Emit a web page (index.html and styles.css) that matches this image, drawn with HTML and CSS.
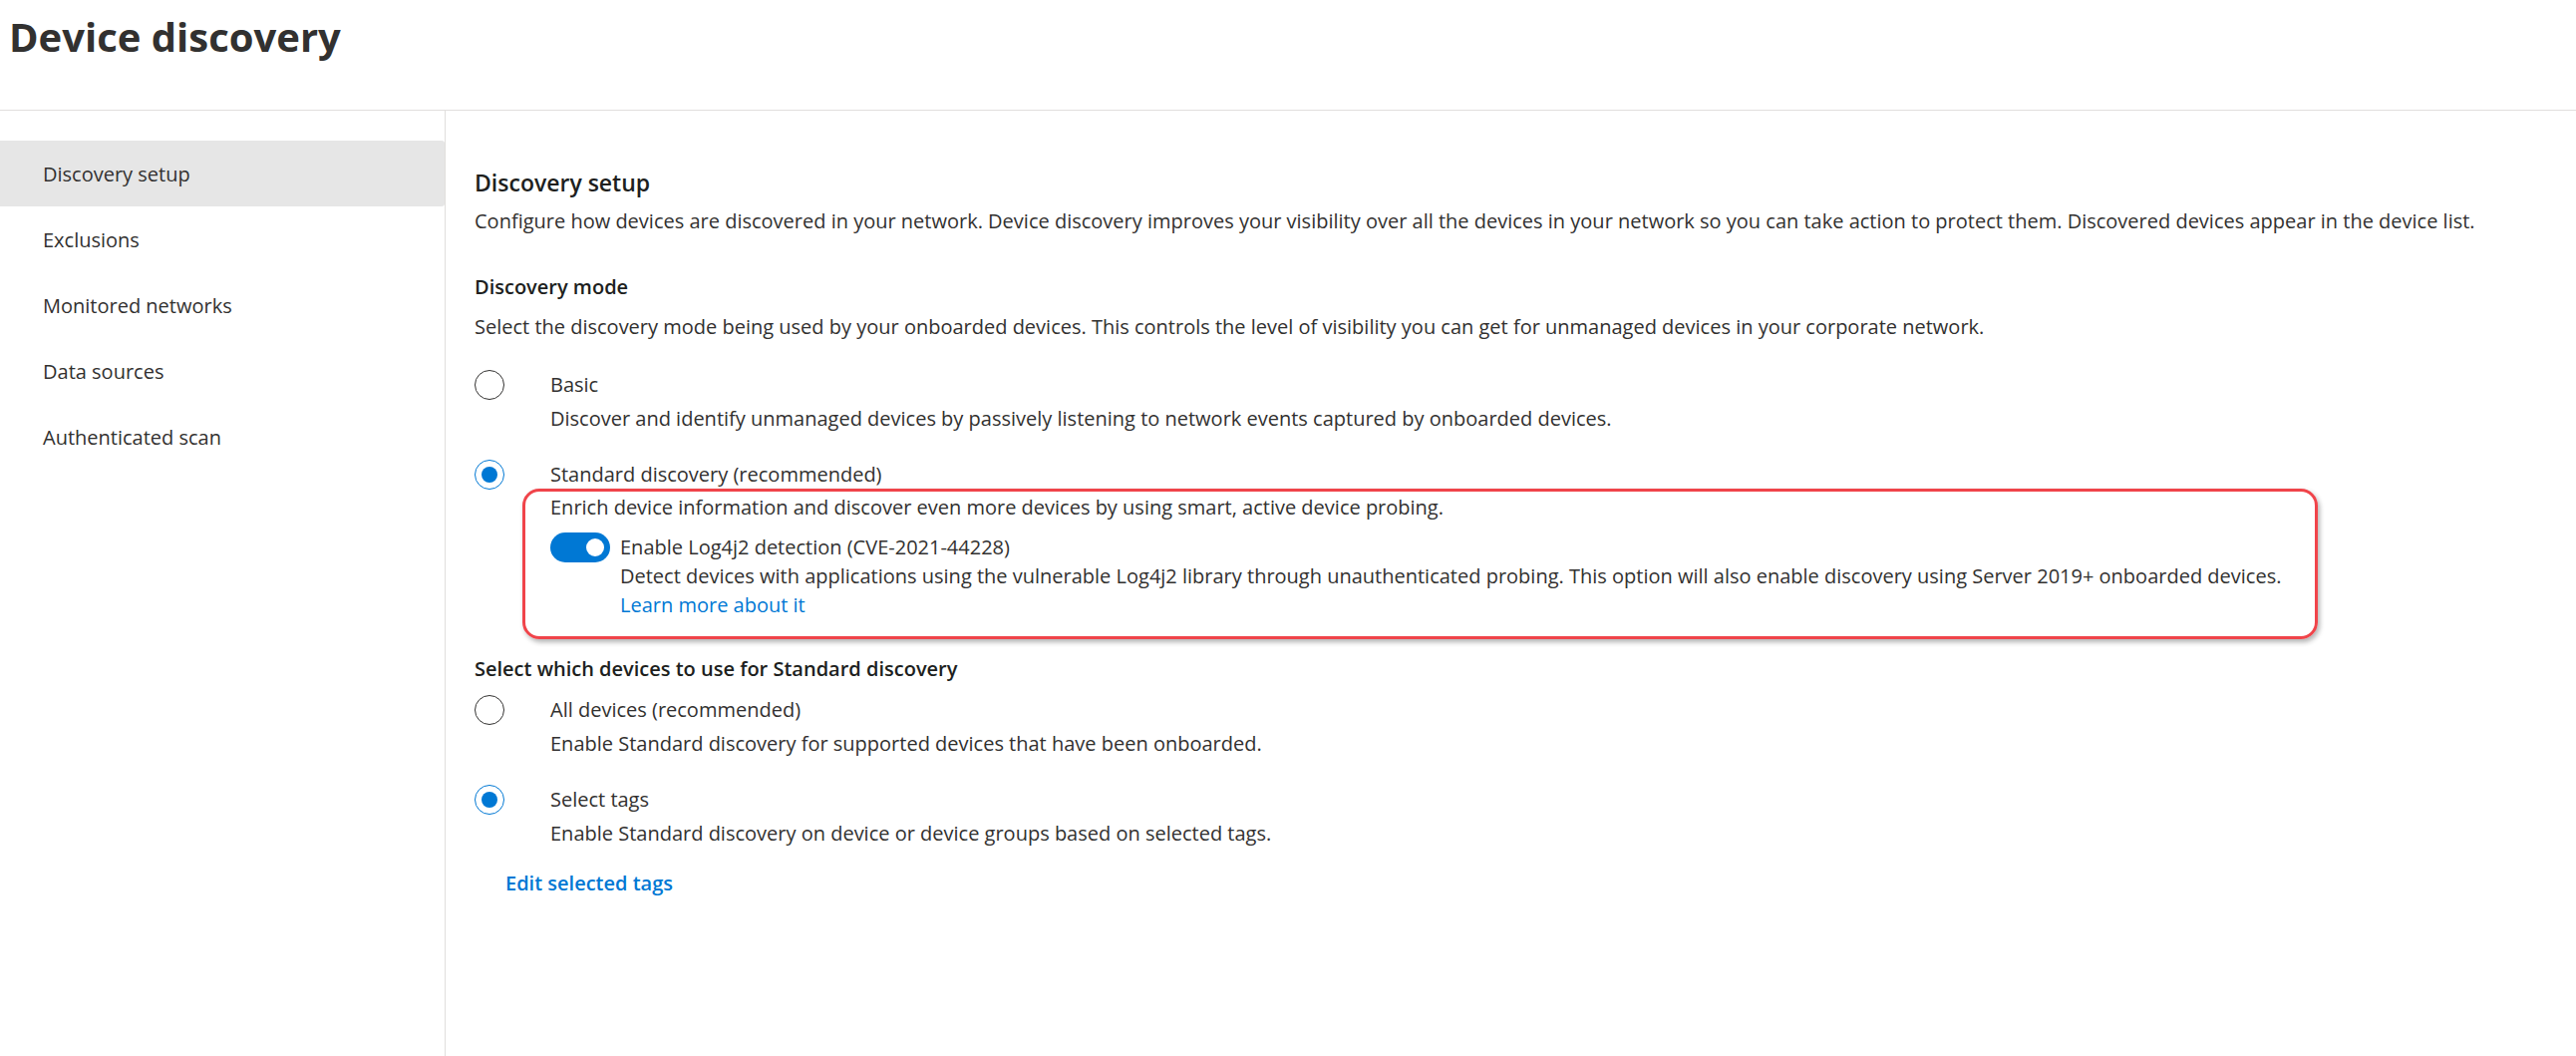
FILE: index.html
```html
<!DOCTYPE html>
<html lang="en">
<head>
    <meta charset="UTF-8">
    <meta name="viewport" content="width=device-width, initial-scale=1.0">
    <title>Device discovery</title>
    <link rel="stylesheet" href="styles.css">
</head>
<body>
    <!-- page title -->
    <div class="page-header">
        <h1>Device discovery</h1>
    </div>

    <div class="layout">
        <!-- left navigation -->
        <div class="side-nav">
            <div class="nav-item active">Discovery setup</div>
            <div class="nav-item">Exclusions</div>
            <div class="nav-item">Monitored networks</div>
            <div class="nav-item">Data sources</div>
            <div class="nav-item">Authenticated scan</div>
        </div>

        <!-- settings -->
        <div class="content">
            <h2 class="section-title">Discovery setup</h2>
            <p class="intro">Configure how devices are discovered in your network. Device discovery improves your visibility over all the devices in your network so you can take action to protect them. Discovered devices appear in the device list.</p>

            <h3 class="group-title">Discovery mode</h3>
            <p class="group-desc">Select the discovery mode being used by your onboarded devices. This controls the level of visibility you can get for unmanaged devices in your corporate network.</p>

            <div class="option first">
                <span class="radio"></span>
                <div>
                    <div class="option-label">Basic</div>
                    <div class="option-desc">Discover and identify unmanaged devices by passively listening to network events captured by onboarded devices.</div>
                </div>
            </div>

            <div class="option">
                <span class="radio checked"></span>
                <div>
                    <div class="option-label">Standard discovery (recommended)</div>
                    <div class="highlight">
                        <div class="enrich">Enrich device information and discover even more devices by using smart, active device probing.</div>
                        <div class="toggle-row">
                            <span class="toggle on"><span class="thumb"></span></span>
                            <div>
                                <div class="toggle-label">Enable Log4j2 detection (CVE-2021-44228)</div>
                                <div class="toggle-desc">Detect devices with applications using the vulnerable Log4j2 library through unauthenticated probing. This option will also enable discovery using Server 2019+ onboarded devices.</div>
                                <a class="link" href="#">Learn more about it</a>
                            </div>
                        </div>
                    </div>
                </div>
            </div>

            <h3 class="group-title devices">Select which devices to use for Standard discovery</h3>

            <div class="option tight">
                <span class="radio"></span>
                <div>
                    <div class="option-label">All devices (recommended)</div>
                    <div class="option-desc">Enable Standard discovery for supported devices that have been onboarded.</div>
                </div>
            </div>

            <div class="option tags">
                <span class="radio checked"></span>
                <div>
                    <div class="option-label">Select tags</div>
                    <div class="option-desc">Enable Standard discovery on device or device groups based on selected tags.</div>
                </div>
            </div>

            <a class="edit-tags" href="#">Edit selected tags</a>
        </div>
    </div>
</body>
</html>
```

FILE: styles.css
```css
body {
    margin: 0;
    font-family: "Open Sans", "Segoe UI", sans-serif;
    font-size: 20px;
    line-height: 30px;
    color: #323130;
    background-color: #ffffff;
}
.page-header {
    height: 110px;
    border-bottom: 1px solid #e1dfdd;
}
.page-header h1 {
    margin: 0;
    padding: 7px 0 0 9px;
    font-size: 40px;
    line-height: 60px;
    font-weight: 700;
    color: #323130;
}
.layout {
    display: flex;
    min-height: 948px;
}
.side-nav {
    width: 446px;
    flex-shrink: 0;
    padding-top: 30px;
    border-right: 1px solid #e1dfdd;
}
.nav-item {
    height: 66px;
    line-height: 68px;
    padding-left: 43px;
}
.nav-item.active {
    background-color: #e6e6e6;
    border-radius: 0 3px 3px 0;
}
.content {
    flex: 1;
    padding: 56px 0 0 29px;
}
.section-title {
    margin: 0;
    font-size: 23px;
    line-height: 32px;
    font-weight: 600;
    color: #201f1e;
}
.intro {
    margin: 8px 0 0;
}
.group-title {
    margin: 36px 0 0;
    font-size: 20px;
    font-weight: 600;
    color: #201f1e;
}
.group-title.devices {
    margin-top: 15px;
}
.group-desc {
    margin: 10px 0 0;
}
.option {
    display: grid;
    grid-template-columns: 30px auto;
    column-gap: 46px;
    margin-top: 26px;
}
.option.first {
    margin-top: 28px;
}
.option.tight {
    margin-top: 11px;
}
.option.tags {
    margin-top: 26px;
}
.option-desc {
    margin-top: 4px;
}
.radio {
    width: 30px;
    height: 30px;
    box-sizing: border-box;
    border: 1px solid #323130;
    border-radius: 50%;
    display: flex;
    align-items: center;
    justify-content: center;
}
.radio.checked {
    border-color: #0078d4;
}
.radio.checked::after {
    content: "";
    width: 16px;
    height: 16px;
    border-radius: 50%;
    background-color: #0078d4;
}
.highlight {
    box-sizing: border-box;
    width: 1801px;
    margin: -1px 0 0 -28px;
    padding: 1px 0 17px 25px;
    border: 3px solid #f0444a;
    border-radius: 17px;
    box-shadow: 2px 3px 5px rgba(0, 0, 0, 0.3);
}
.toggle-row {
    display: grid;
    grid-template-columns: 60px auto;
    column-gap: 10px;
    margin-top: 10px;
    line-height: 29px;
}
.toggle {
    width: 60px;
    height: 30px;
    box-sizing: border-box;
    border-radius: 15px;
    background-color: #0078d4;
    display: flex;
    align-items: center;
    justify-content: flex-end;
    padding-right: 6px;
}
.toggle .thumb {
    width: 18px;
    height: 18px;
    border-radius: 50%;
    background-color: #ffffff;
}
.link {
    color: #0078d4;
    text-decoration: none;
}
.edit-tags {
    display: inline-block;
    margin: 20px 0 0 31px;
    color: #0078d4;
    font-weight: 600;
    text-decoration: none;
}
```
